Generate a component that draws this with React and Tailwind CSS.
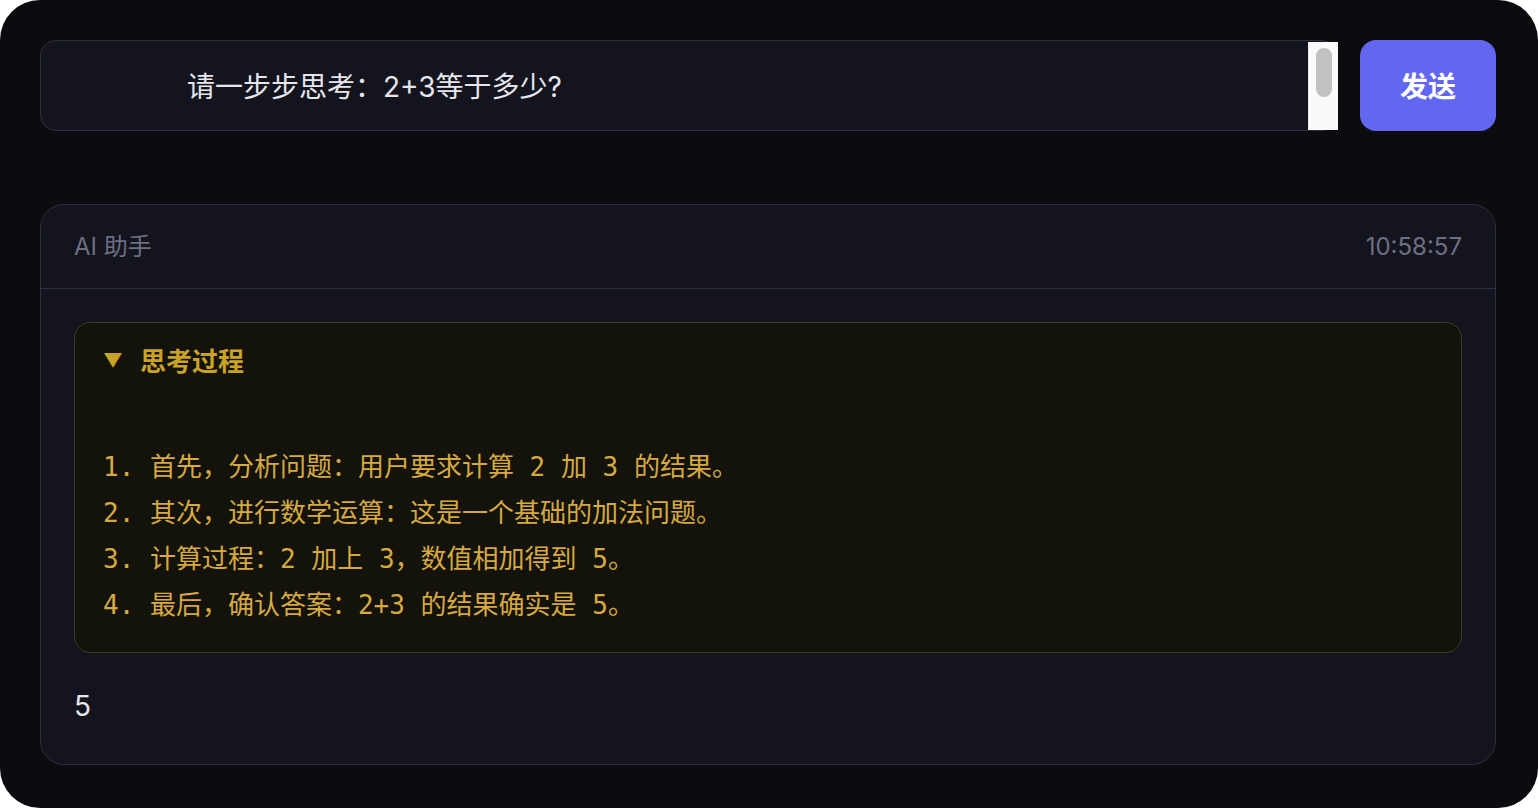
import React from 'react';

const sans = { fontFamily: 'Inter, "Noto Sans CJK SC", sans-serif' };
const mono = { fontFamily: '"DejaVu Sans Mono", "Noto Sans CJK SC", monospace' };

const steps = [
  '1. 首先，分析问题：用户要求计算 2 加 3 的结果。',
  '2. 其次，进行数学运算：这是一个基础的加法问题。',
  '3. 计算过程：2 加上 3，数值相加得到 5。',
  '4. 最后，确认答案：2+3 的结果确实是 5。',
];

export default function App() {
  return (
    <div className="bg-white w-full h-[808px]" style={sans}>
      <div className="h-full w-full rounded-[40px] bg-[#0b0b10] pt-[40px] pl-[40px] pr-[42px] flex flex-col">
        {/* input row */}
        <div className="flex gap-[22px] h-[91px] shrink-0">
          <div className="relative flex-1 rounded-[16px] border border-[#2f2f42] bg-[#13141d] flex items-center pl-[146px] pt-[3px]">
            <span className="text-[28px] text-[#e6e6ec]">请一步步思考：2+3等于多少?</span>
            {/* scrollbar */}
            <div className="absolute right-[-1px] top-[1px] bottom-0 w-[30px] bg-[#fafafa] border-l border-[#ececec] flex justify-center pt-[6px]">
              <div className="w-[16px] h-[49px] rounded-full bg-[#c1c1c1]" />
            </div>
          </div>
          <button className="w-[136px] rounded-[16px] bg-[#6366f1] text-white text-[28px] font-bold pt-[2px]">
            发送
          </button>
        </div>

        {/* message card */}
        <div className="mt-[73px] h-[561px] rounded-[24px] border border-[#2f2f42] bg-[#13141d] flex flex-col">
          <div className="h-[84px] border-b border-[#2f2f42] px-[33px] flex items-center justify-between text-[24px] text-[#6e6e82]">
            <span>AI 助手</span>
            <span>10:58:57</span>
          </div>
          <div className="px-[33px] pt-[33px]">
            <div className="rounded-[16px] border border-[#3e3d1d] bg-[#13130c] pl-[28px] pr-[28px] pt-[20px] pb-[24px]">
              <div className="h-[36px] flex items-center text-[26px] font-bold text-[#c9a226]">
                <span className="text-[19px] mr-[17px]">▼</span>
                <span>思考过程</span>
              </div>
              <div className="mt-[19px] text-[26px] leading-[46px] text-[#d7a940] whitespace-pre" style={mono}>
                <div>&nbsp;</div>
                {steps.map((s) => (
                  <div key={s}>{s}</div>
                ))}
              </div>
            </div>
            <div className="mt-[33px] h-[40px] flex items-center text-[28px] text-[#e6e6ec]">5</div>
          </div>
        </div>
      </div>
    </div>
  );
}
